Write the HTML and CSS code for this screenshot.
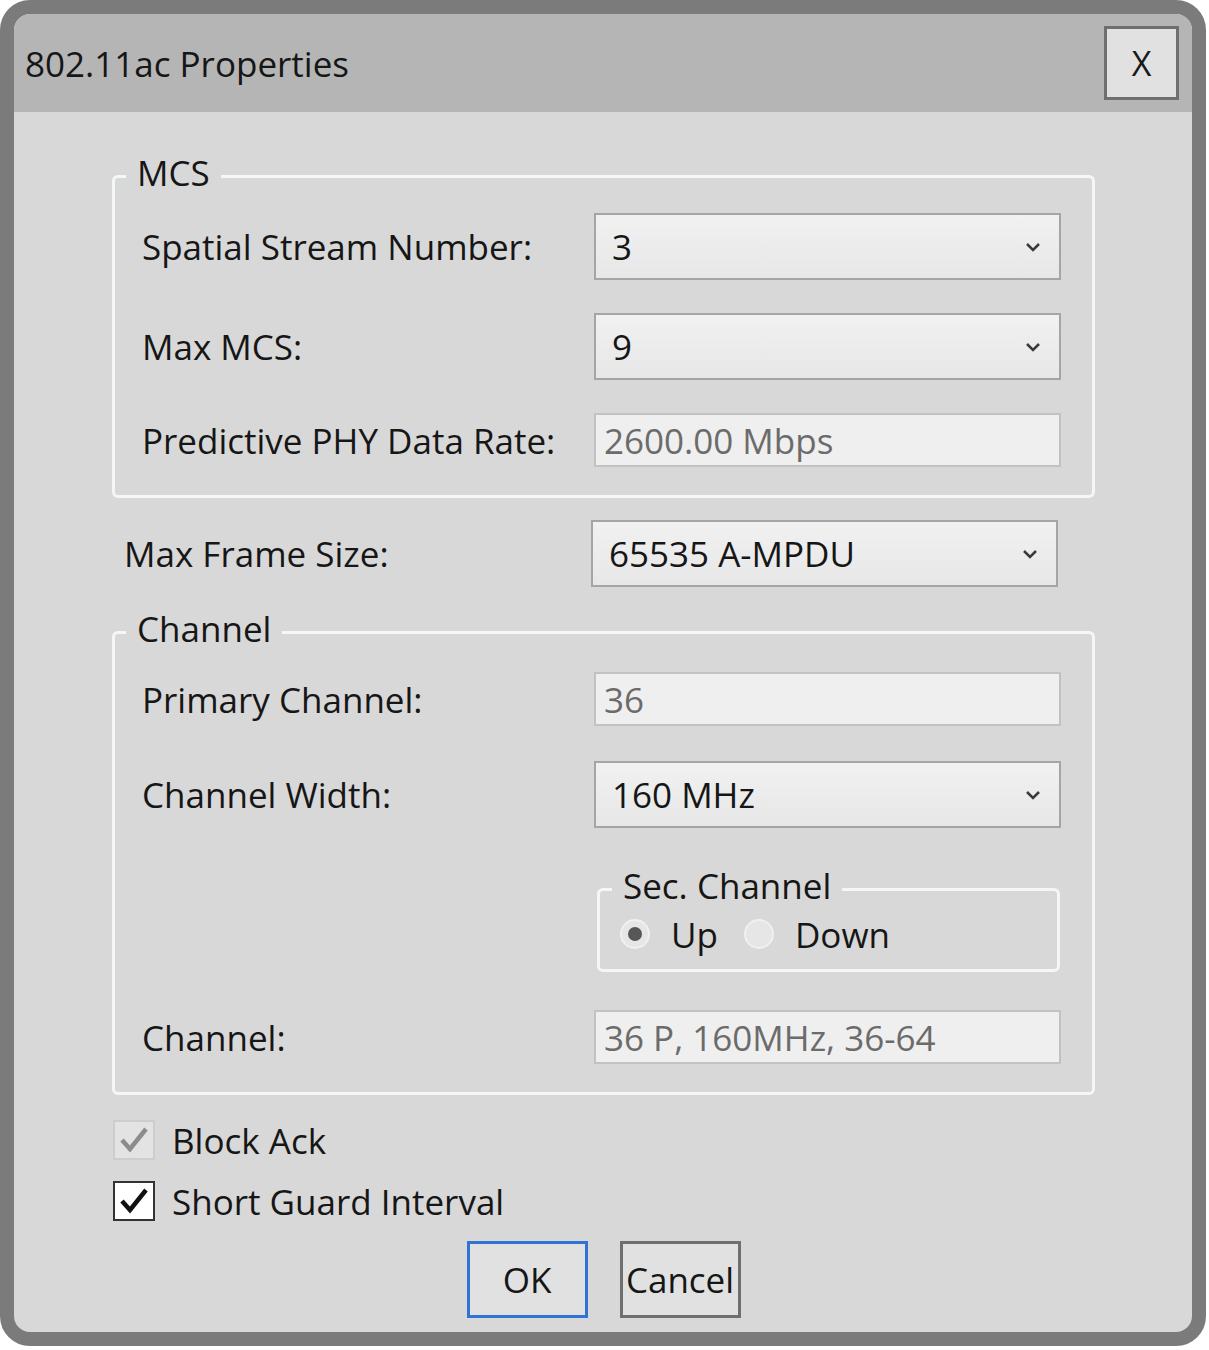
FILE: index.html
```html
<!DOCTYPE html>
<html lang="en">
<head>
    <meta charset="UTF-8">
    <title>802.11ac Properties</title>
    <link rel="stylesheet" href="styles.css">
</head>
<body>
    <div class="dialog">
        <div class="titlebar">
            <span class="title">802.11ac Properties</span>
            <button class="close-btn">X</button>
        </div>
        <div class="content">
            <fieldset class="group mcs">
                <legend>MCS</legend>
                <div class="stack">
                    <div class="field">
                        <label>Spatial Stream Number:</label>
                        <div class="combo"><span>3</span>
                            <svg class="chevron" width="16" height="10" viewBox="0 0 16 10"><polyline points="2,2 8,8 14,2" /></svg>
                        </div>
                    </div>
                    <div class="field">
                        <label>Max MCS:</label>
                        <div class="combo"><span>9</span>
                            <svg class="chevron" width="16" height="10" viewBox="0 0 16 10"><polyline points="2,2 8,8 14,2" /></svg>
                        </div>
                    </div>
                    <div class="field">
                        <label>Predictive PHY Data Rate:</label>
                        <div class="textbox">2600.00 Mbps</div>
                    </div>
                </div>
            </fieldset>

            <div class="field frame-size">
                <label>Max Frame Size:</label>
                <div class="combo"><span>65535 A-MPDU</span>
                    <svg class="chevron" width="16" height="10" viewBox="0 0 16 10"><polyline points="2,2 8,8 14,2" /></svg>
                </div>
            </div>

            <fieldset class="group channel">
                <legend>Channel</legend>
                <div class="field">
                    <label>Primary Channel:</label>
                    <div class="textbox">36</div>
                </div>
                <div class="field width-row">
                    <label>Channel Width:</label>
                    <div class="combo"><span>160 MHz</span>
                        <svg class="chevron" width="16" height="10" viewBox="0 0 16 10"><polyline points="2,2 8,8 14,2" /></svg>
                    </div>
                </div>
                <div class="field sec-row">
                    <span></span>
                    <fieldset class="group sec">
                        <legend>Sec. Channel</legend>
                        <div class="radios">
                            <span class="radio checked"></span><span class="radio-label">Up</span>
                            <span class="radio"></span><span class="radio-label">Down</span>
                        </div>
                    </fieldset>
                </div>
                <div class="field chan-row">
                    <label>Channel:</label>
                    <div class="textbox">36 P, 160MHz, 36-64</div>
                </div>
            </fieldset>

            <div class="checks">
                <div class="check-row">
                    <span class="checkbox disabled">
                        <svg width="38" height="38" viewBox="0 0 38 38"><polyline points="7,19 15,28 31,8" /></svg>
                    </span>
                    <span>Block Ack</span>
                </div>
                <div class="check-row">
                    <span class="checkbox">
                        <svg width="38" height="38" viewBox="0 0 38 38"><polyline points="7,19 15,28 31,8" /></svg>
                    </span>
                    <span>Short Guard Interval</span>
                </div>
            </div>

            <div class="buttons">
                <button class="btn default">OK</button>
                <button class="btn">Cancel</button>
            </div>
        </div>
    </div>
</body>
</html>
```

FILE: styles.css
```css
body {
    margin: 0;
    background: #ffffff;
    font-family: "Open Sans", "Noto Sans", sans-serif;
    font-size: 35px;
    color: #161616;
}
.dialog {
    width: 1206px;
    height: 1346px;
    box-sizing: border-box;
    border: 14px solid #7b7b7b;
    border-radius: 30px;
    background: #d8d8d8;
    overflow: hidden;
    display: flex;
    flex-direction: column;
}
.titlebar {
    flex: none;
    height: 98px;
    background: #b5b5b5;
    display: flex;
    align-items: center;
    justify-content: space-between;
    padding: 0 13px 0 11px;
}
.title {
    line-height: 1;
}
.close-btn {
    width: 75px;
    height: 74px;
    box-sizing: border-box;
    border: 3px solid #6f6f6f;
    background: #e1e1e1;
    font-family: inherit;
    font-size: 34px;
    color: #1a1a1a;
    padding: 0;
}
.content {
    flex: 1;
    padding: 41px 97px 0 98px;
    display: flex;
    flex-direction: column;
}

/* group boxes */
.group {
    margin: 0;
    border: 3px solid #f4f7f8;
    border-radius: 6px;
    min-inline-size: 0;
}
.group legend {
    padding: 0 11px 6px;
    margin-left: -16px;
    line-height: 40px;
}
.mcs {
    padding: 14px 31px 28px 27px;
}
.channel {
    margin-top: 22px;
    padding: 17px 31px 28px 27px;
}
.stack {
    display: flex;
    flex-direction: column;
    gap: 33px;
}

/* label + control rows */
.field {
    display: grid;
    grid-template-columns: 452px 467px;
    align-items: center;
}
.frame-size {
    margin-top: 22px;
    padding-left: 12px;
    grid-template-columns: 467px 467px;
}
.width-row {
    margin-top: 35px;
}
.sec-row {
    margin-top: 38px;
}
.chan-row {
    margin-top: 38px;
}
.combo {
    height: 67px;
    box-sizing: border-box;
    border: 2px solid #a5a5a5;
    background: linear-gradient(#f1f1f1, #e7e7e7);
    display: flex;
    align-items: center;
    justify-content: space-between;
    padding: 0 18px 0 16px;
}
.chevron polyline {
    fill: none;
    stroke: #3a3a3a;
    stroke-width: 2.5;
}
.textbox {
    height: 54px;
    box-sizing: border-box;
    border: 2px solid #c2c2c2;
    background: #efefef;
    color: #6b6b6b;
    display: flex;
    align-items: center;
    padding: 0 8px;
}

/* secondary channel radios */
.sec {
    margin: 0 1px 0 3px;
    padding: 7px 20px 20px 20px;
}
.sec legend {
    margin-left: -8px;
}
.radios {
    display: flex;
    align-items: center;
    height: 30px;
}
.radio {
    width: 30px;
    height: 30px;
    box-sizing: border-box;
    border-radius: 50%;
    border: 2px solid #f0f0f0;
    background: #e6e6e6;
    display: flex;
    align-items: center;
    justify-content: center;
}
.radio.checked::after {
    content: "";
    width: 14px;
    height: 14px;
    border-radius: 50%;
    background: #575757;
}
.radio-label {
    margin: 0 26px 0 21px;
}

/* checkboxes */
.checks {
    margin-top: 25px;
    display: flex;
    flex-direction: column;
    gap: 21px;
}
.check-row {
    display: flex;
    align-items: center;
    gap: 17px;
    height: 40px;
}
.checkbox {
    width: 42px;
    height: 40px;
    box-sizing: border-box;
    margin-left: 1px;
    border: 2px solid #333333;
    background: #ffffff;
    display: flex;
    align-items: center;
    justify-content: center;
}
.checkbox polyline {
    fill: none;
    stroke: #111111;
    stroke-width: 4.5;
}
.checkbox.disabled {
    border-color: #cdcdcd;
    background: #e3e3e3;
}
.checkbox.disabled polyline {
    stroke: #8c8c8c;
}

/* dialog buttons */
.buttons {
    margin-top: 20px;
    display: flex;
    justify-content: center;
    gap: 32px;
}
.btn {
    width: 121px;
    height: 77px;
    box-sizing: border-box;
    border: 3px solid #6f6f6f;
    background: #e1e1e1;
    font-family: inherit;
    font-size: 35px;
    color: #161616;
    padding: 0;
}
.btn.default {
    border-color: #2f73d6;
}
```
